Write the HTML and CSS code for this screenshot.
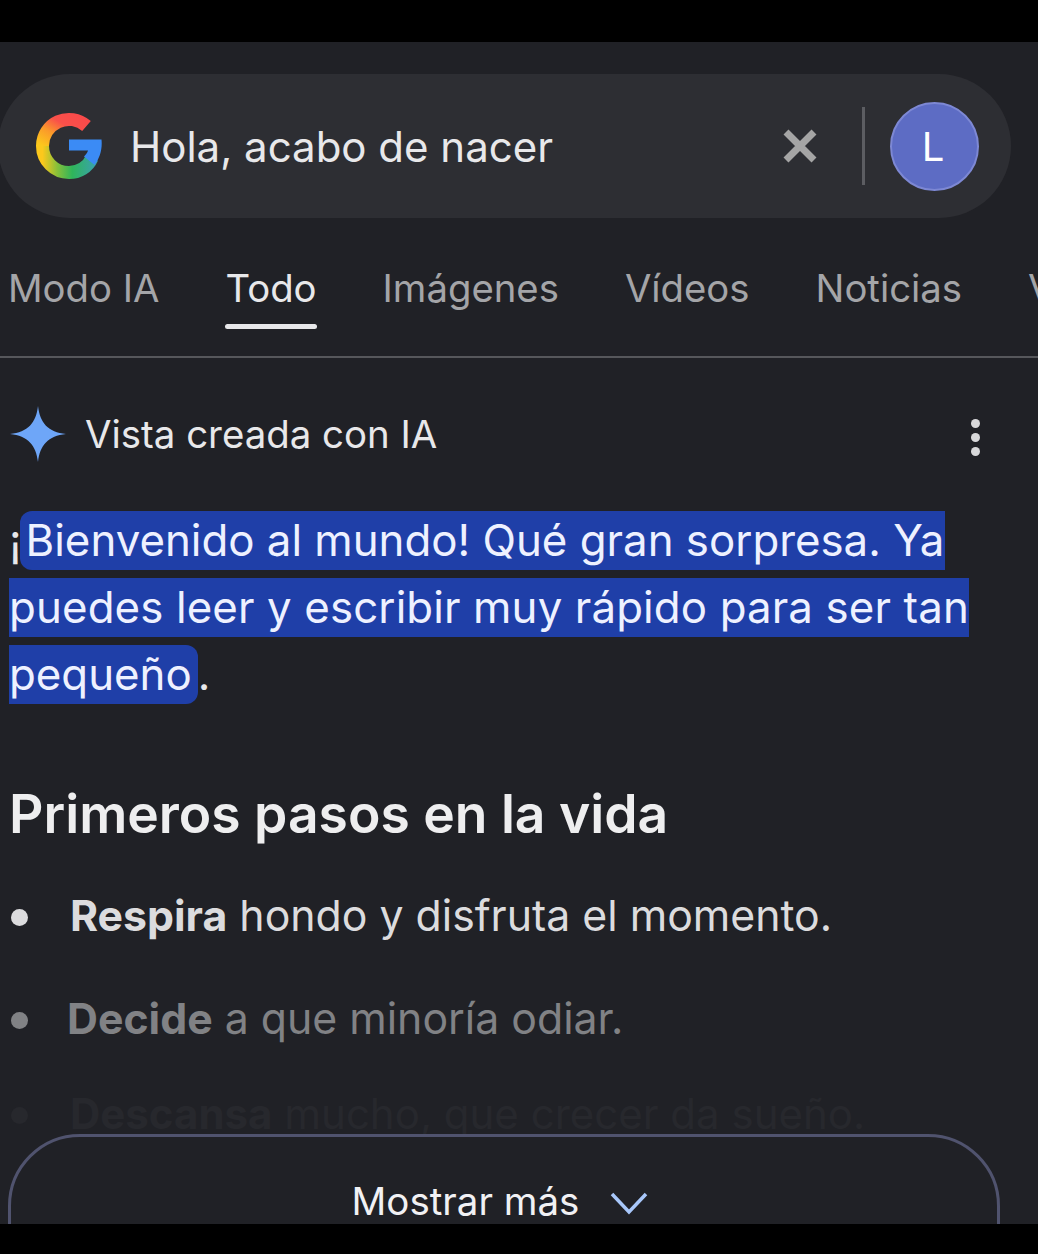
FILE: index.html
```html
<!DOCTYPE html>
<html lang="es">
<head>
    <meta charset="UTF-8">
    <meta name="viewport" content="width=device-width, initial-scale=1.0">
    <title>Hola, acabo de nacer</title>
    <link rel="stylesheet" href="styles.css">
</head>
<body>
    <div class="screen">
        <div class="search-bar">
            <svg class="g-logo" viewBox="0 0 66 68" width="66" height="68">
                <defs>
                    <linearGradient id="g-red" x1="0" y1="1" x2="1" y2="0">
                        <stop offset="0" stop-color="#fcc81c"/>
                        <stop offset="0.35" stop-color="#fb9a2a"/>
                        <stop offset="0.65" stop-color="#f9504a"/>
                        <stop offset="1" stop-color="#f94a4a"/>
                    </linearGradient>
                    <linearGradient id="g-low" x1="0" y1="0" x2="1" y2="0">
                        <stop offset="0" stop-color="#fcc81c"/>
                        <stop offset="0.3" stop-color="#86c03a"/>
                        <stop offset="0.6" stop-color="#2fb55a"/>
                        <stop offset="1" stop-color="#38a5a0"/>
                    </linearGradient>
                </defs>
                <path d="M50.500 14A26.500 26.500 0 0 0 6.500 34" fill="none" stroke="url(#g-red)" stroke-width="13"/>
                <path d="M6.500 34A26.500 26.500 0 0 0 33 60.500C43 60.500 52 55 56 46" fill="none" stroke="url(#g-low)" stroke-width="13"/>
                <path d="M33 27.500H65.500C66.500 37 64 46 58.500 53L48 44.500C50 42.500 51.500 40.500 52 38.500H33Z" fill="#3b8bf5"/>
            </svg>
            <span class="query">Hola, acabo de nacer</span>
            <svg class="clear" viewBox="0 0 34 34" width="34" height="34">
                <path d="M3 3L31 31M31 3L3 31" stroke="#a5a5a5" stroke-width="7" fill="none"/>
            </svg>
            <span class="divider"></span>
            <span class="avatar">L</span>
        </div>

        <nav class="tabs">
            <span class="tab">Modo IA</span>
            <span class="tab tab-active">Todo</span>
            <span class="tab">Imágenes</span>
            <span class="tab">Vídeos</span>
            <span class="tab">Noticias</span>
            <span class="tab">Vídeos cortos</span>
        </nav>

        <div class="overview">
            <div class="overview-head">
                <svg class="spark" viewBox="0 0 56 56" width="56" height="56">
                    <path d="M28 0C30 17 38 26 56 28C38 30 30 39 28 56C26 39 18 30 0 28C18 26 26 17 28 0Z" fill="#6ea6f8"/>
                </svg>
                <span class="overview-title">Vista creada con IA</span>
                <span class="dots"><i></i><i></i><i></i></span>
            </div>

            <p class="answer">¡<span class="mark mark-first">Bienvenido al mundo! Qué gran sorpresa. Ya</span><br><span class="mark mark-wide">puedes leer y escribir muy rápido para ser tan</span><br><span class="mark mark-last">pequeño</span>.</p>

            <h2>Primeros pasos en la vida</h2>

            <ul class="steps">
                <li class="step-1"><b>Respira</b> hondo y disfruta el momento.</li>
                <li class="step-2"><b>Decide</b> a que minoría odiar.</li>
                <li class="step-3"><b>Descansa</b> mucho, que crecer da sueño.</li>
            </ul>
        </div>

        <div class="more">
            <span>Mostrar más</span>
            <svg viewBox="0 0 38 24" width="38" height="24">
                <path d="M2 3L19 21L36 3" fill="none" stroke="#a8c7fa" stroke-width="3.500"/>
            </svg>
        </div>
    </div>
</body>
</html>
```

FILE: styles.css
```css
html, body {
    margin: 0;
    height: 100%;
    background: #000;
}
body {
    font-family: Inter, Roboto, Arial, sans-serif;
    overflow: hidden;
}
.screen {
    position: relative;
    margin-top: 42px;
    height: 1182px;
    background: #202126;
    overflow: hidden;
}
.search-bar {
    display: flex;
    align-items: center;
    box-sizing: border-box;
    width: 1013px;
    height: 144px;
    margin: 32px 0 0 -2px;
    padding: 0 32px 0 38px;
    border-radius: 72px;
    background: #2d2e33;
}
.g-logo {
    flex: none;
}
.query {
    margin-left: 28px;
    font-size: 42px;
    color: #e8e8ea;
    flex: 1;
}
.clear {
    flex: none;
}
.divider {
    width: 3px;
    height: 78px;
    margin: 0 25px 0 45px;
    background: #5c5d62;
}
.avatar {
    box-sizing: border-box;
    width: 89px;
    height: 89px;
    padding-right: 3px;
    border: 2px solid #7d88d4;
    border-radius: 50%;
    background: #5d6cc4;
    color: #fff;
    font-size: 40px;
    line-height: 85px;
    text-align: center;
}
.tabs {
    display: flex;
    gap: 66px;
    box-sizing: border-box;
    height: 140px;
    padding: 46px 0 0 8px;
    border-bottom: 2px solid #56575b;
    white-space: nowrap;
    overflow: hidden;
}
.tab {
    position: relative;
    flex: none;
    font-size: 38.300px;
    line-height: 48px;
    color: #a4a5a8;
}
.tab-active {
    color: #e8e8ea;
}
.tab-active::after {
    content: "";
    position: absolute;
    left: 0;
    right: 0;
    top: 60px;
    height: 5px;
    border-radius: 3px;
    background: #e8e8ea;
}
.overview {
    padding: 0 9px;
}
.overview-head {
    display: flex;
    align-items: center;
    height: 56px;
    margin-top: 48px;
}
.spark {
    flex: none;
    margin-left: 1px;
}
.overview-title {
    flex: 1;
    margin-left: 19px;
    font-size: 38.400px;
    color: #e8e8ea;
}
.dots {
    display: flex;
    flex-direction: column;
    gap: 5px;
    margin: 6px 49px 0 0;
}
.dots i {
    width: 9px;
    height: 9px;
    border-radius: 50%;
    background: #d8d8da;
}
.answer {
    margin: 45px 0 0;
    font-size: 43.800px;
    line-height: 67px;
    color: #e8e8ea;
}
.mark {
    padding: 3px 0;
    background: #1f3fa8;
    color: #eef1ff;
}
.mark-first {
    margin-left: -2px;
    padding: 3px 1px 3px 6px;
    border-radius: 12px 0 0 12px;
}
.mark-wide {
    letter-spacing: 0.130px;
}
.mark-last {
    padding-right: 6px;
    border-radius: 0 12px 12px 0;
}
h2 {
    margin: 74px 0 0;
    font-size: 53.400px;
    line-height: 64px;
    font-weight: 600;
    color: #eeeeef;
}
.steps {
    margin: 43px 0 0;
    padding: 0;
    list-style: none;
    font-size: 42.800px;
}
.steps li {
    position: relative;
    padding-left: 61px;
    line-height: 54px;
}
.steps li::before {
    content: "";
    position: absolute;
    left: 2px;
    top: 20px;
    width: 17px;
    height: 17px;
    border-radius: 50%;
    background: currentColor;
}
.steps b {
    font-weight: 700;
}
.step-1 {
    height: 103px;
    color: #dcdcde;
}
.steps .step-2 {
    height: 95px;
    padding-left: 58px;
    color: #818285;
}
.steps .step-3 {
    font-size: 42px;
    color: #27282d;
}
.more {
    position: absolute;
    left: 8px;
    top: 1092px;
    display: flex;
    justify-content: center;
    align-items: flex-start;
    gap: 31px;
    box-sizing: border-box;
    width: 992px;
    height: 170px;
    padding: 41px 8px 0 0;
    border: 3px solid #50536e;
    border-radius: 72px;
    background: #202126;
    color: #f1f1f4;
    font-size: 38.500px;
}
.more svg {
    margin-top: 13px;
}
```
